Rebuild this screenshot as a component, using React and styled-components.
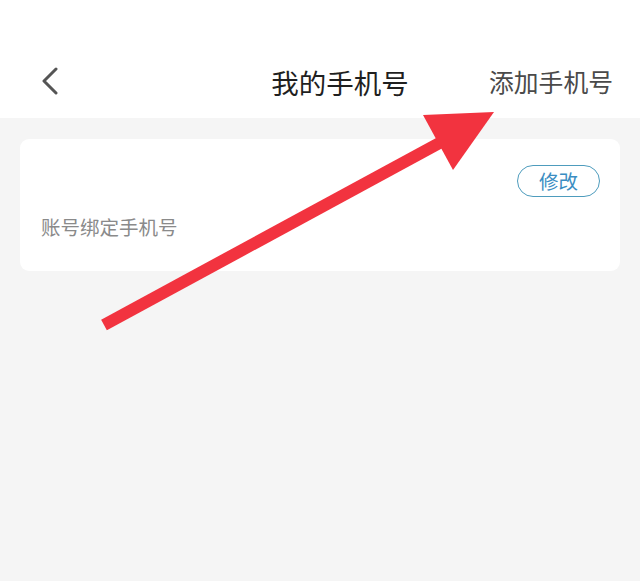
import React from "react";
import styled, { createGlobalStyle } from "styled-components";

const Global = createGlobalStyle`
  html, body { margin: 0; padding: 0; background: #f5f5f5; }
  body { font-family: "Noto Sans CJK SC", "Noto Sans", sans-serif; }
  * { box-sizing: border-box; }
`;

const Page = styled.div`
  position: relative;
  width: 640px;
  height: 581px;
  background: #f5f5f5;
  overflow: hidden;
`;

const Header = styled.header`
  height: 118px;
  background: #ffffff;
  padding-top: 40px;
  display: grid;
  grid-template-columns: 1fr auto 1fr;
  align-items: center;
`;

const BackButton = styled.div`
  padding-left: 40px;
  display: flex;
  align-items: center;
  height: 78px;
  padding-top: 5px;
`;

const Title = styled.h1`
  margin: 0;
  font-size: 27.5px;
  font-weight: 400;
  color: #1f1f1f;
  line-height: 1;
  padding-top: 8px;
  padding-left: 40px;
`;

const Action = styled.div`
  justify-self: end;
  padding-right: 27px;
  font-size: 24.8px;
  color: #4a4a4a;
  line-height: 1;
  padding-top: 4px;
`;

const Content = styled.main`
  padding: 21px 20px 0;
`;

const Card = styled.section`
  background: #ffffff;
  border-radius: 9px;
  height: 132px;
  padding: 26px 20px 0 21px;
  display: flex;
  flex-direction: column;
`;

const EditButton = styled.div`
  align-self: flex-end;
  width: 83px;
  height: 32px;
  border: 1.5px solid #4e9cbd;
  border-radius: 16px;
  display: flex;
  align-items: center;
  justify-content: center;
  font-size: 19.5px;
  color: #3a8dc2;
  line-height: 1;
  padding-bottom: 1px;
`;

const Label = styled.div`
  margin-top: 20px;
  font-size: 19.5px;
  color: #8a8a8a;
  line-height: 1;
`;

const ArrowLayer = styled.svg`
  position: absolute;
  left: 0;
  top: 0;
  pointer-events: none;
`;

export default function App() {
  return (
    <>
      <Global />
      <Page>
        <Header>
          <BackButton>
            <svg width="20" height="30" viewBox="0 0 20 30">
              <polyline
                points="16,2 4,14 16,26"
                fill="none"
                stroke="#555"
                strokeWidth="3"
                strokeLinecap="round"
                strokeLinejoin="round"
              />
            </svg>
          </BackButton>
          <Title>我的手机号</Title>
          <Action>添加手机号</Action>
        </Header>
        <Content>
          <Card>
            <EditButton>修改</EditButton>
            <Label>账号绑定手机号</Label>
          </Card>
        </Content>
        <ArrowLayer width="640" height="581" viewBox="0 0 640 581">
          <line
            x1="104"
            y1="325"
            x2="445"
            y2="140"
            stroke="#f2333f"
            strokeWidth="12"
          />
          <polygon points="423,115 494,112 453,170" fill="#f2333f" />
        </ArrowLayer>
      </Page>
    </>
  );
}
